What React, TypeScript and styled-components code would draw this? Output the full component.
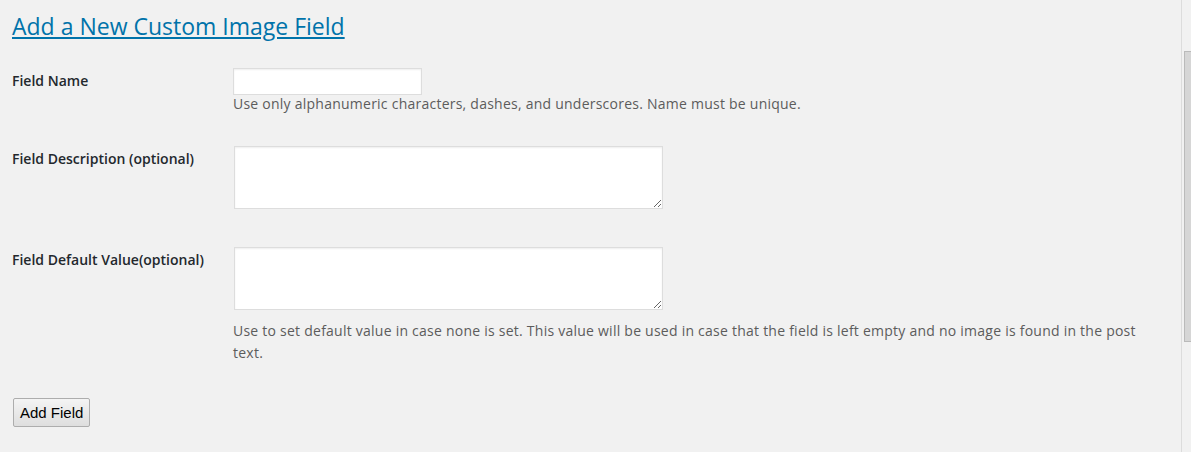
import React from "react";
import styled, { createGlobalStyle } from "styled-components";

const GlobalStyle = createGlobalStyle`
  html, body {
    margin: 0;
    padding: 0;
    background: #f1f1f1;
  }
  body {
    font-family: "Open Sans", "Noto Sans", sans-serif;
    color: #444;
    overflow: hidden;
  }
`;

const Page = styled.div`
  display: flex;
  height: 452px;
  background: #f1f1f1;
`;

const Main = styled.main`
  flex: 1;
  padding: 12px 0 0 12px;
  min-width: 0;
`;

const Title = styled.h2`
  margin: 0;
  font-size: 23px;
  font-weight: 400;
  line-height: 29px;
`;

const TitleLink = styled.a`
  color: #0073aa;
  text-decoration: underline;
  text-decoration-thickness: 2px;
  text-underline-offset: 2px;
`;

const FormTable = styled.div`
  display: flex;
  flex-direction: column;
  margin-top: 27px;
`;

const Row = styled.div<{ $spaceAfter: number }>`
  display: grid;
  grid-template-columns: 221px 1fr;
  padding-bottom: ${(p) => p.$spaceAfter}px;
`;

const Label = styled.label`
  padding-top: 2px;
  font-size: 14px;
  font-weight: 600;
  line-height: 21px;
  color: #23282d;
`;

const Cell = styled.div`
  display: flex;
  flex-direction: column;
  align-items: flex-start;
`;

const TextInput = styled.input`
  display: block;
  box-sizing: border-box;
  width: 189px;
  height: 27px;
  margin: 0;
  padding: 3px 5px;
  border: 1px solid #ddd;
  background: #fff;
  box-shadow: inset 0 1px 2px rgba(0, 0, 0, 0.07);
  font-family: inherit;
  font-size: 14px;
  outline: none;
`;

const TextArea = styled.textarea`
  display: block;
  box-sizing: border-box;
  width: 429px;
  height: 63px;
  margin: 0 0 0 1px;
  padding: 2px 6px;
  border: 1px solid #ddd;
  background: #fff;
  box-shadow: inset 0 1px 2px rgba(0, 0, 0, 0.07);
  font-family: inherit;
  font-size: 14px;
  outline: none;
`;

const Help = styled.p<{ $top: number }>`
  margin: ${(p) => p.$top}px 0 0 0;
  max-width: 922px;
  font-size: 14px;
  letter-spacing: 0.24px;
  line-height: 22px;
  color: #5c5c5c;
`;

const SubmitButton = styled.button`
  display: block;
  box-sizing: border-box;
  height: 29px;
  margin: 0 0 0 1px;
  padding: 0 6px;
  border: 1px solid #adadad;
  border-radius: 2px;
  background: linear-gradient(#f4f4f4, #dedede);
  font-family: "Liberation Sans", Arial, sans-serif;
  font-size: 15px;
  color: #000;
`;

const ScrollTrack = styled.div`
  width: 9px;
  border-left: 1px solid #dcdcdc;
  padding-top: 51px;
  background: #f1f1f1;
`;

const ScrollThumb = styled.div`
  box-sizing: border-box;
  height: 291px;
  margin-left: 2px;
  background: #d6d6d6;
  border: 1px solid #bababa;
  border-right: none;
`;

export default function App() {
  return (
    <>
      <GlobalStyle />
      <Page>
        <Main>
          <Title>
            <TitleLink href="#">Add a New Custom Image Field</TitleLink>
          </Title>
          <FormTable>
            <Row $spaceAfter={31}>
              <Label htmlFor="field-name">Field Name</Label>
              <Cell>
                <TextInput id="field-name" type="text" />
                <Help $top={-2}>
                  Use only alphanumeric characters, dashes, and underscores. Name must be unique.
                </Help>
              </Cell>
            </Row>
            <Row $spaceAfter={38}>
              <Label htmlFor="field-desc">Field Description (optional)</Label>
              <Cell>
                <TextArea id="field-desc" />
              </Cell>
            </Row>
            <Row $spaceAfter={34}>
              <Label htmlFor="field-default">Field Default Value(optional)</Label>
              <Cell>
                <TextArea id="field-default" />
                <Help $top={10}>
                  Use to set default value in case none is set. This value will be used in case that the field is left empty and no image is found in the post text.
                </Help>
              </Cell>
            </Row>
          </FormTable>
          <SubmitButton type="button">Add Field</SubmitButton>
        </Main>
        <ScrollTrack>
          <ScrollThumb />
        </ScrollTrack>
      </Page>
    </>
  );
}
